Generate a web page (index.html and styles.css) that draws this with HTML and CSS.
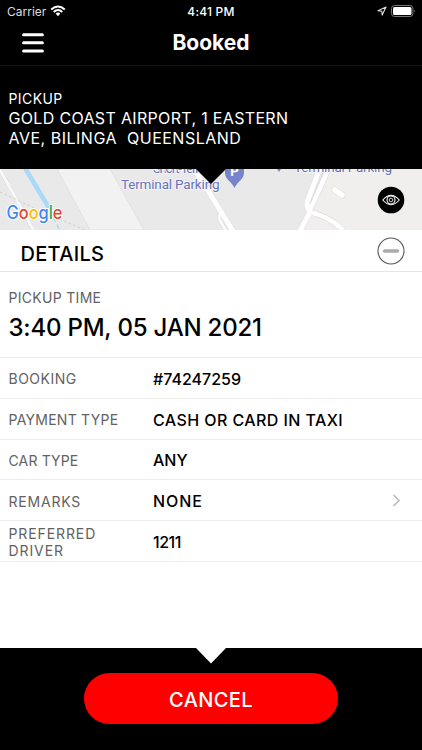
FILE: index.html
```html
<!DOCTYPE html>
<html lang="en">
<head>
<meta charset="utf-8">
<title>Booked</title>
<link rel="stylesheet" href="styles.css">
</head>
<body>
<header class="header">
  <div class="status">
    <div class="status-left"><span class="carrier">Carrier</span>
      <svg class="wifi" width="16" height="12" viewBox="0 0 16 12"><path d="M1.2 4.5Q8-1.6 14.8 4.5M3.7 7Q8 3.1 12.3 7" fill="none" stroke="#fff" stroke-width="2"/><path d="M5.6 8.6Q8 6.6 10.4 8.6L8 11.2Z" fill="#fff"/></svg>
    </div>
    <div class="clock">4:41 PM</div>
    <div class="status-right">
      <svg width="10" height="10" viewBox="0 0 10 10"><path d="M.9 4.8 9 1 5.2 9.1 4.8 5.2Z" fill="none" stroke="#ddd" stroke-width="1.1" stroke-linejoin="round"/></svg>
      <svg width="25" height="12" viewBox="0 0 25 12"><rect x=".5" y=".5" width="21.4" height="11" rx="3" fill="none" stroke="#777"/><rect x="2" y="2" width="18.5" height="8" rx="1.5" fill="#fff"/><path d="M23.3 4.3Q24.8 6 23.3 7.7Z" fill="#888"/></svg>
    </div>
  </div>
  <div class="nav">
    <svg class="menu" width="22" height="20" viewBox="0 0 22 20"><path d="M1.6 1.7H20.4M1.6 9.8H20.4M1.6 17.9H20.4" stroke="#fff" stroke-width="3" stroke-linecap="round"/></svg>
    <h1 class="title">Booked</h1>
  </div>
</header>
<section class="pickup">
  <div class="pickup-label">PICKUP</div>
  <div class="address"><div class="addr-one">GOLD COAST AIRPORT, 1 EASTERN</div><div class="addr-two">AVE, BILINGA&nbsp; QUEENSLAND</div></div>
</section>
<section class="map">
  <svg class="map-art" width="422" height="61" viewBox="0 169 422 61">
    <rect y="169" width="422" height="61" fill="#e9e9e9"/>
    <path d="M325 169H422V230H302Z" fill="#f0efee"/>
    <path d="M57 169H110L144 230H90Z" fill="#f2f2f2" stroke="#dddde0" stroke-width=".7"/>
    <path d="M-1 168 34 231" stroke="#dcdcde" stroke-width="3.6"/><path d="M-1 168 34 231" stroke="#f8f8f8" stroke-width="2.8"/>
    <path d="M25 168 49 208" stroke="#a9d9f8" stroke-width="4.5"/>
    <path d="M50 210 60 231" stroke="#a9d9f8" stroke-width="1.4" stroke-dasharray="5 3"/>
    <path d="M0 192 45 213 85 230" fill="none" stroke="#c6c6c8" stroke-width=".7" stroke-dasharray="3 2"/>
    <g fill="none" stroke-linejoin="round">
      <path d="M193 168 207 189 233 231" stroke="#e0e0e4" stroke-width="6"/>
      <path d="M222 212Q217 216 221 222L226 231" stroke="#dddde1" stroke-width="3.6"/>
      <path d="M320 168 307.500 201Q306 207 310 212L300 231M329 168 309 212Q329 216 343 230" stroke="#dfdfe3" stroke-width="6"/>
      <path d="M193 168 207 189 233 231" stroke="#fff" stroke-width="5"/>
      <path d="M222 212Q217 216 221 222L226 231" stroke="#fff" stroke-width="2.4"/>
      <path d="M320 168 307.500 201Q306 207 310 212L300 231" stroke="#fff" stroke-width="5"/>
      <path d="M329 168 309 212Q329 216 343 230" stroke="#fff" stroke-width="4.600"/>
      <path d="M325 168 310 204" stroke="#dedee2" stroke-width=".9"/>
      <path d="M335 190 342 195" stroke="#dedee1" stroke-width="6.600" stroke-linecap="round"/>
      <path d="M335 190 342 195" stroke="#fff" stroke-width="5.5" stroke-linecap="round"/>
    </g>
    <g class="place"><text x="153" y="172.5" textLength="54">Short-Term</text><text x="121" y="188.8" textLength="98.5">Terminal Parking</text><text x="294" y="172.300" textLength="98">Terminal Parking</text></g>
    <path d="M225 169H244V173C244 179 238 181 234.5 188C231 181 225 179 225 173Z" fill="#7784cb"/>
    <text x="230.2" y="175.5" class="pin-letter">P</text>
    <path d="M277 169H281L279 172Z" fill="#7784cb"/>
    <path d="M196 169H226L211 184Z" fill="#000"/>
    <text x="6.5" y="218.7" class="google" textLength="56" lengthAdjust="spacingAndGlyphs"><tspan fill="#4285f4">G</tspan><tspan fill="#ea4335">o</tspan><tspan fill="#fbbc05">o</tspan><tspan fill="#4285f4">g</tspan><tspan fill="#34a853">l</tspan><tspan fill="#ea4335">e</tspan></text>
  </svg>
  <svg class="eye" width="28" height="28" viewBox="0 0 28 28"><circle cx="14" cy="14" r="13.3"/><g fill="none" stroke="#fff" stroke-width="1.1"><path d="M5.8 14Q14 4.6 22.2 14Q14 23.4 5.8 14Z"/><circle cx="14" cy="14" r="4"/><circle cx="14" cy="14" r="1.8" stroke-width=".8"/></g></svg>
</section>
<main class="details">
  <div class="details-head"><h2>DETAILS</h2>
    <svg width="28" height="28" viewBox="0 0 28 28"><circle cx="14" cy="14" r="13" fill="#fff" stroke="#555" stroke-width="1.1"/><path d="M7.5 14H20.5" stroke="#aaa" stroke-width="3.4" stroke-linecap="round"/></svg>
  </div>
  <div class="time"><div class="label l-time">PICKUP TIME</div><div class="time-value">3:40 PM, 05 JAN 2021</div></div>
  <div class="row"><div class="label l-booking">BOOKING</div><div class="value v-number">#74247259</div></div>
  <div class="row"><div class="label l-payment">PAYMENT TYPE</div><div class="value v-payment">CASH OR CARD IN TAXI</div></div>
  <div class="row"><div class="label l-car">CAR TYPE</div><div class="value v-any">ANY</div></div>
  <div class="row"><div class="label l-remarks">REMARKS</div><div class="value v-none">NONE</div><svg class="chevron" width="9" height="13" viewBox="0 0 9 13"><path d="M1.5 1 7 6.5 1.5 12" fill="none" stroke="#bcbcc0" stroke-width="1.7"/></svg></div>
  <div class="row"><div class="label l-driver">PREFERRED<br>DRIVER</div><div class="value v-driver">1211</div></div>
</main>
<footer class="footer">
  <svg class="notch" width="30" height="16" viewBox="0 0 30 16"><path d="M0 0H30L15 15.5Z" fill="#fff"/></svg>
  <button class="cancel">CANCEL</button>
</footer>
</body>
</html>
```
FILE: styles.css
```css
* { box-sizing: border-box; }
body { margin: 0; width: 422px; height: 750px; display: flex; flex-direction: column; overflow: hidden; background: #fff; color: #000; font-family: Inter, "Liberation Sans", sans-serif; }
svg { display: block; flex-shrink: 0; }
.header { height: 66px; background: #000; color: #fff; border-bottom: 1px solid #171717; }
.status { display: grid; grid-template-columns: 1fr auto 1fr; height: 22px; padding: 0 6px 0 7px; align-items: center; font-size: 12px; }
.status-left, .status-right { display: flex; align-items: center; }
.status-left { gap: 4px; }
.carrier { color: #ddd; }
.wifi { margin-top: -1px; }
.status-right { justify-content: flex-end; gap: 4px; }
.clock { font-weight: 500; letter-spacing: .2px; margin-left: -1px; }
.nav { display: grid; grid-template-columns: 1fr auto 1fr; height: 43px; padding: 0 22px; align-items: center; }
.title { margin: -1px 0 0; font-size: 21px; font-weight: 700; line-height: 26px; }
.menu { margin-top: -2px; }
.pickup { height: 103px; padding: 24px 8.5px 0; background: #000; color: #fff; }
.pickup-label { font-size: 14px; line-height: 17px; letter-spacing: .4px; }
.address { margin-top: 1px; font-size: 16px; line-height: 20px; white-space: nowrap; }
.addr-one { letter-spacing: .33px; }
.addr-two { letter-spacing: .5px; }
.map { position: relative; height: 61px; overflow: hidden; }
.place { fill: #6972bb; stroke: #f4f4f6; stroke-width: 2px; paint-order: stroke; font: 13.5px Roboto, sans-serif; }
.pin-letter { fill: #fff; font: 700 13px Roboto, sans-serif; }
.google { font: 500 18px Inter, sans-serif; stroke: #fff; stroke-width: 2px; paint-order: stroke; }
.eye { position: absolute; right: 17px; top: 17px; }
.details { flex: 1; }
.details-head { display: flex; align-items: center; justify-content: space-between; height: 42px; padding: 0 17px 0 20.5px; border-bottom: 1px solid #e5e5e5; }
.details-head h2 { margin: 6px 0 0; font-size: 20px; font-weight: 500; line-height: 24px; letter-spacing: .3px; }
.time { height: 86px; padding: 17px 8.5px 0; border-bottom: 1px solid #eee; }
.label { color: #626262; font-size: 14px; line-height: 17px; }
.l-time { letter-spacing: .3px; }
.time-value { margin-top: 7px; font-size: 24px; font-weight: 500; line-height: 30px; white-space: nowrap; letter-spacing: -.2px; }
.row { display: grid; grid-template-columns: 144.5px 1fr auto; height: 40.75px; padding: 2px 21px 0 8.5px; align-items: center; border-bottom: 1px solid #eee; }
.value { font-size: 16px; font-weight: 500; line-height: 20px; }
.l-booking { letter-spacing: .5px; }
.l-payment { letter-spacing: .25px; }
.l-car { letter-spacing: .15px; }
.l-remarks { letter-spacing: .8px; }
.l-driver { letter-spacing: .9px; }
.v-payment { letter-spacing: .42px; }
.v-none { letter-spacing: .9px; }
.v-driver { letter-spacing: -.5px; }
.chevron { margin-top: -2px; }
.footer { position: relative; display: flex; justify-content: center; height: 102px; padding-top: 25px; background: #000; }
.notch { position: absolute; left: 196px; top: 0; }
.cancel { width: 254px; height: 51px; padding: 3px 0 0; border: 0; border-radius: 26px; background: #f00; color: #fff; font: 500 20px/24px Inter, sans-serif; letter-spacing: .4px; }
```
